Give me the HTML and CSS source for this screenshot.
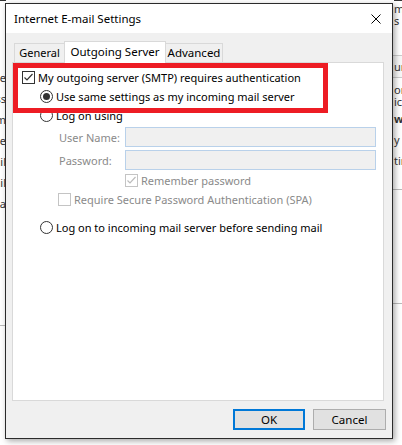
FILE: index.html
```html
<!DOCTYPE html>
<html lang="en">
<head>
  <meta charset="UTF-8">
  <title>Internet E-mail Settings</title>
  <link rel="stylesheet" href="styles.css">
</head>
<body>

  <div class="fundo">
    <div class="fundoEsq">
      <div class="linhaFundo topo">er information</div>
      <div class="linhaFundo" style="height: 64px"></div>
      <div class="linhaFundo">Your Name</div>
      <div class="linhaFundo">Email Address</div>
      <div class="linhaFundo">Server Inform</div>
      <div class="linhaFundo">Account Type</div>
      <div class="linhaFundo">Incoming mail</div>
      <div class="linhaFundo">Outgoing mail</div>
      <div class="linhaFundo">Logon Informa</div>
    </div>
    <div class="fundoDir">
      <div class="linhaFundo topo">Test Accoun</div>
      <div class="linhaFundo curta">me</div>
      <div class="linhaFundo curta">s a</div>
      <div class="caixaFundo">
        <div class="linhaFundo">ur</div>
      </div>
      <div class="linhaFundo curta">on</div>
      <div class="linhaFundo curta">ick</div>
      <div class="linhaFundo"><b>w</b></div>
      <div class="linhaFundo">y (</div>
      <div class="linhaFundo">tin</div>
      <div class="regraFundo"></div>
    </div>
  </div>

  <div class="janela">
    <div class="barraTitulo">
      <span>Internet E-mail Settings</span>
      <svg class="fechar" width="10" height="10" viewBox="0 0 10 10">
        <path d="M0.5 0.5 L9.5 9.5 M9.5 0.5 L0.5 9.5" stroke="#000" stroke-width="1" fill="none"/>
      </svg>
    </div>

    <div class="corpo">
      <div class="abas">
        <div class="aba primeira">General</div>
        <div class="aba ativa">Outgoing Server</div>
        <div class="aba ultima">Advanced</div>
      </div>

      <div class="painel">
        <div class="linha recuo1">
          <span class="caixa marcada">
            <svg width="11" height="11" viewBox="0 0 11 11"><path d="M1.5 5.5 L4 8 L9.5 2" stroke="#333" stroke-width="1.2" fill="none"/></svg>
          </span>
          <span>My outgoing server (SMTP) requires authentication</span>
        </div>
        <div class="linha recuo2">
          <span class="radio marcado"></span>
          <span>Use same settings as my incoming mail server</span>
        </div>
        <div class="linha recuo2">
          <span class="radio"></span>
          <span>Log on using</span>
        </div>

        <div class="campo campoUsuario">
          <span class="rotulo">User Name:</span>
          <span class="entrada"></span>
        </div>
        <div class="campo campoSenha">
          <span class="rotulo">Password:</span>
          <span class="entrada"></span>
        </div>

        <div class="linha recuo4 desativado">
          <span class="caixa marcada inativa">
            <svg width="11" height="11" viewBox="0 0 11 11"><path d="M1.5 5.5 L4 8 L9.5 2" stroke="#bcbcbc" stroke-width="1.2" fill="none"/></svg>
          </span>
          <span>Remember password</span>
        </div>
        <div class="linha recuo3 desativado">
          <span class="caixa inativa"></span>
          <span>Require Secure Password Authentication (SPA)</span>
        </div>

        <div class="linha recuo2 ultimaLinha">
          <span class="radio"></span>
          <span>Log on to incoming mail server before sending mail</span>
        </div>

        <div class="destaque"></div>
      </div>

      <div class="botoes">
        <button class="botao padrao">OK</button>
        <button class="botao">Cancel</button>
      </div>
    </div>
  </div>

</body>
</html>
```

FILE: styles.css
```css
* {
  box-sizing: border-box;
}
body {
  margin: 0;
  width: 402px;
  height: 445px;
  overflow: hidden;
  background: #ffffff;
  font-family: 'Noto Sans', 'Open Sans', sans-serif;
  font-size: 11px;
  color: #000;
  position: relative;
}

/* janela de tras */
.fundo {
  display: flex;
  justify-content: space-between;
  height: 445px;
  color: #333;
}
.fundoEsq {
  width: 6px;
  overflow: hidden;
  display: flex;
  flex-direction: column;
  align-items: flex-end;
  border-bottom: 1px solid #bbb;
  height: 326px;
}
.fundoDir {
  width: 12px;
  overflow: hidden;
  background: #fff;
  padding-left: 4px;
}
.linhaFundo {
  height: 21px;
  line-height: 21px;
  white-space: nowrap;
}
.linhaFundo.curta {
  height: 12px;
  line-height: 12px;
}
.linhaFundo.topo {
  margin-top: -13px;
  height: 16px;
  line-height: 16px;
  text-decoration: underline;
}
.caixaFundo {
  margin: 28px 0 6px -4px;
  padding-left: 4px;
  border-top: 1px solid #ccc;
  border-bottom: 1px solid #ccc;
  background: #f7f7f7;
}
.regraFundo {
  margin-top: 18px;
  height: 115px;
  border-top: 1px solid #bbb;
  border-bottom: 1px solid #bbb;
  margin-left: -4px;
}

/* dialogo */
.janela {
  position: absolute;
  left: 5px;
  top: 3px;
  width: 388px;
  height: 436px;
  border: 1px solid #2b2b2b;
  background: #f0f0f0;
  box-shadow: 2px 2px 6px rgba(0,0,0,0.35);
  display: flex;
  flex-direction: column;
}
.barraTitulo {
  height: 29px;
  background: #fff;
  display: flex;
  align-items: center;
  justify-content: space-between;
  padding: 0 10px 0 8px;
  font-size: 11.5px;
}
.fechar {
  margin-right: 1px;
}
.corpo {
  flex: 1;
  padding: 8px 0 0 6px;
}

.abas {
  display: flex;
  height: 21px;
  padding-left: 2px;
  align-items: flex-end;
}
.aba {
  height: 19px;
  border: 1px solid #d9d9d9;
  border-bottom: none;
  line-height: 18px;
  background: #f0f0f0;
  text-align: center;
  white-space: nowrap;
}
.aba.primeira {
  width: 51px;
}
.aba.ativa {
  width: 102px;
  height: 22px;
  margin-bottom: -1px;
  margin-left: -1px;
  background: #fff;
  position: relative;
  z-index: 1;
  line-height: 19px;
  font-size: 11.5px;
}
.aba.ultima {
  width: 58px;
  margin-left: -1px;
  font-size: 11.5px;
}

.painel {
  position: relative;
  width: 372px;
  height: 339px;
  background: #fff;
  border: 1px solid #d9d9d9;
  padding-top: 5px;
}
.destaque {
  position: absolute;
  left: 0;
  top: 0;
  width: 315px;
  height: 50px;
  border: 5px solid #ed1c24;
}

.linha {
  height: 19px;
  display: flex;
  align-items: center;
  white-space: nowrap;
}
.recuo1 { padding-left: 9px; }
.recuo2 { padding-left: 27px; }
.recuo3 { padding-left: 45px; }
.recuo4 { padding-left: 112px; }
.ultimaLinha { margin-top: 9px; }
.desativado { color: #8a8a8a; }

.caixa {
  width: 13px;
  height: 13px;
  border: 1px solid #333;
  background: #fff;
  margin-right: 3px;
  display: flex;
  align-items: center;
  justify-content: center;
}
.caixa.inativa {
  border-color: #c4c4c4;
}
.radio {
  width: 13px;
  height: 13px;
  border: 1px solid #333;
  border-radius: 50%;
  margin-right: 3px;
  display: flex;
  align-items: center;
  justify-content: center;
}
.radio.marcado::after {
  content: '';
  width: 7px;
  height: 7px;
  border-radius: 50%;
  background: #333;
}

.campo {
  display: flex;
  align-items: center;
  height: 20px;
  padding-left: 46px;
  color: #8a8a8a;
  white-space: nowrap;
}
.campoUsuario { margin-top: 2px; }
.campoSenha { margin-top: 3px; margin-bottom: 1px; }
.rotulo {
  width: 66px;
}
.entrada {
  width: 251px;
  height: 20px;
  background: #f0f0f0;
  border: 1px solid #b9d1ea;
}

.botoes {
  display: flex;
  justify-content: flex-end;
  gap: 8px;
  padding: 8px 6px 0 0;
}
.botao {
  width: 73px;
  height: 21px;
  font-family: inherit;
  font-size: 11.5px;
  background: #e1e1e1;
  border: 1px solid #adadad;
  padding: 0;
  color: #000;
}
.botao.padrao {
  width: 72px;
  border: 2px solid #0078d7;
}
```
